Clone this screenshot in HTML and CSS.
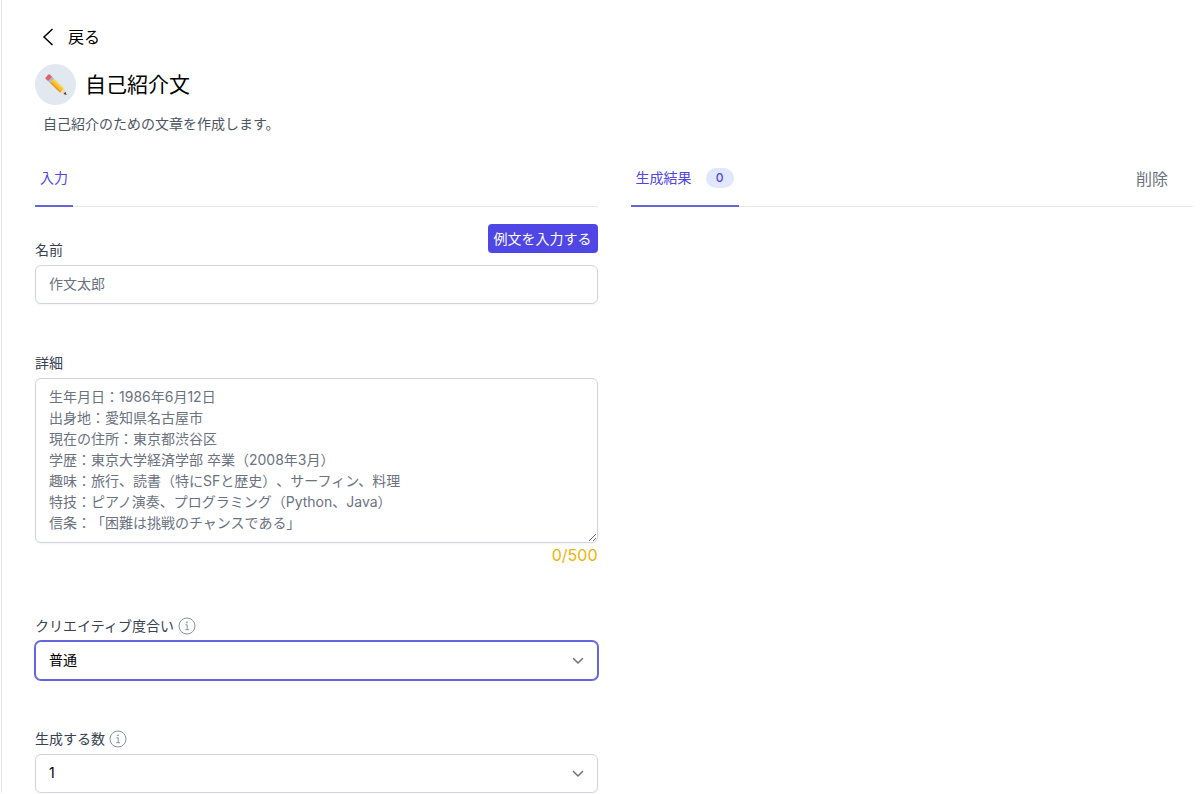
FILE: index.html
```html
<!DOCTYPE html>
<html lang="ja">
<head>
<meta charset="utf-8">
<meta name="viewport" content="width=device-width, initial-scale=1">
<title>自己紹介文</title>
<link rel="stylesheet" href="styles.css">
</head>
<body>
<main class="page">
  <a class="back" href="#">
    <svg class="back-icon" viewBox="0 0 12 18" aria-hidden="true"><path d="M10.500 1 2 9l8.500 8"/></svg>
    戻る
  </a>
  <header class="heading">
    <span class="heading-icon">
      <svg viewBox="0 0 24 24" aria-hidden="true">
        <g transform="translate(3 3) rotate(44)">
          <path fill="#e2606c" d="M0-2Q0-3 1-3H4.500V3H1Q0 3 0 2Z"/>
          <path fill="#9cc3cb" d="M4.500-3H7V3H4.500Z"/>
          <path fill="#fbd24b" d="M7-3H21V-1H7Z"/>
          <path fill="#f7bc20" d="M7-1H21V1.200H7Z"/>
          <path fill="#e79a16" d="M7 1.200H21V3H7Z"/>
          <path fill="#f3d9a4" d="M21-3 27 0 21 3Z"/>
          <path fill="#3e4347" d="M24.300-1.500 27.300 0 24.300 1.500Z"/>
        </g>
      </svg>
    </span>
    <h1 class="title">自己紹介文</h1>
  </header>
  <p class="description">自己紹介のための文章を作成します。</p>

  <div class="columns">
    <section>
      <nav class="tabs">
        <a class="tab" href="#">入力</a>
      </nav>
      <form class="form">
        <div class="field">
          <div class="label-row">
            <label class="label" for="name">名前</label>
            <button class="example" type="button">例文を入力する</button>
          </div>
          <input class="control" id="name" type="text" placeholder="作文太郎">
        </div>
        <div class="field">
          <label class="label" for="detail">詳細</label>
          <textarea class="control detail" id="detail" rows="7" placeholder="生年月日：1986年6月12日
出身地：愛知県名古屋市
現在の住所：東京都渋谷区
学歴：東京大学経済学部 卒業（2008年3月）
趣味：旅行、読書（特にSFと歴史）、サーフィン、料理
特技：ピアノ演奏、プログラミング（Python、Java）
信条：「困難は挑戦のチャンスである」"></textarea>
          <p class="count">0/500</p>
        </div>
        <div class="field">
          <label class="label" for="creative">クリエイティブ度合い<svg class="info" viewBox="0 0 18 18" aria-hidden="true"><circle cx="9" cy="9" r="8"/><path d="M7.500 7.800H9.200V12.700M7.300 12.700H11"/><circle class="dot" cx="9" cy="5.300" r=".9"/></svg></label>
          <div class="select">
            <select class="control active" id="creative"><option>普通</option></select>
            <svg class="arrow" viewBox="0 0 12 8" aria-hidden="true"><path d="M1.500 1.500 6 6 10.500 1.500"/></svg>
          </div>
        </div>
        <div class="field">
          <label class="label" for="amount">生成する数<svg class="info" viewBox="0 0 18 18" aria-hidden="true"><circle cx="9" cy="9" r="8"/><path d="M7.500 7.800H9.200V12.700M7.300 12.700H11"/><circle class="dot" cx="9" cy="5.300" r=".9"/></svg></label>
          <div class="select">
            <select class="control" id="amount"><option>1</option></select>
            <svg class="arrow" viewBox="0 0 12 8" aria-hidden="true"><path d="M1.500 1.500 6 6 10.500 1.500"/></svg>
          </div>
        </div>
      </form>
    </section>

    <section>
      <nav class="tabs">
        <a class="tab" href="#">生成結果 <span class="badge">0</span></a>
        <button class="delete" type="button">削除</button>
      </nav>
    </section>
  </div>
</main>
</body>
</html>
```
FILE: styles.css
```css
*, *::before, *::after { box-sizing: border-box; }

body {
  margin: 0;
  background: #fff;
  color: #000;
  font: 14px/20px Inter, "Noto Sans CJK JP", sans-serif;
  text-spacing-trim: space-all;
}

h1, p { margin: 0; font-weight: 400; }
a { color: inherit; text-decoration: none; }
button, input, select, textarea { font: inherit; margin: 0; }

.page {
  margin-left: 1px;
  padding: 25px 7px 0 33px;
  border-left: 1px solid #e5e7eb;
}

.back {
  display: flex;
  align-items: center;
  gap: 14px;
  width: fit-content;
  padding-left: 7px;
  font-size: 16px;
  line-height: 24px;
}
.back-icon {
  width: 12px;
  height: 18px;
  fill: none;
  stroke: #000;
  stroke-width: 1.5;
}

.heading {
  display: flex;
  align-items: center;
  gap: 9px;
  margin-top: 15px;
}
.heading-icon {
  display: grid;
  place-items: center;
  width: 41px;
  height: 41px;
  border-radius: 50%;
  background: #e2e8f0;
}
.heading-icon svg { width: 24px; height: 24px; }
.title { font-size: 21px; line-height: 28px; }

.description {
  margin-top: 9px;
  padding-left: 8px;
  color: #4b5563;
}

.columns {
  display: grid;
  grid-template-columns: 1fr 1fr;
  gap: 33px;
  margin-top: 24px;
}

.tabs {
  display: flex;
  justify-content: space-between;
  box-shadow: inset 0 -1px #e5e7eb;
}
.tab {
  display: flex;
  align-items: center;
  gap: 14px;
  padding: 10px 5px 17px;
  border-bottom: 2px solid #6366d8;
  color: #4f46e5;
}
.badge {
  min-width: 28px;
  border-radius: 10px;
  background: #e0e7ff;
  font-size: 12px;
  font-weight: 500;
  text-align: center;
}
.delete {
  padding: 0 25px 8px 0;
  border: 0;
  background: none;
  color: #6b7280;
  font-size: 16px;
}

.form {
  display: grid;
  gap: 49px;
  padding-top: 17px;
}
.label {
  display: flex;
  align-items: center;
  gap: 4px;
  margin-bottom: 5px;
  color: #374151;
}
.label-row { display: flex; justify-content: space-between; }
.label-row .label { padding-top: 16px; }
.example {
  align-self: flex-start;
  height: 29px;
  padding: 0 6px;
  border: 0;
  border-radius: 4px;
  background: #4f46e5;
  color: #fff;
}

.control {
  display: block;
  width: 100%;
  height: 39px;
  padding: 7px 13px 9px;
  border: 1px solid #d1d5db;
  border-radius: 6px;
  background: #fff;
  box-shadow: 0 1px 2px rgb(0 0 0 / 5%);
  color: #000;
  outline: 0;
}
.control::placeholder { color: #6b7280; opacity: 1; }
.detail {
  height: auto;
  line-height: 21px;
  overflow: auto;
  resize: vertical;
  text-spacing-trim: space-all;
}
.count {
  color: #eab308;
  font-size: 16px;
  line-height: 24px;
  text-align: right;
}

.info {
  width: 18px;
  height: 18px;
  fill: none;
  stroke: #8b9097;
  stroke-width: 1;
}
.info .dot { fill: #8b9097; stroke: none; }

.select { display: grid; align-items: center; }
.select > * { grid-area: 1 / 1; }
.select .control { appearance: none; }
.select .active {
  border-color: #6366e0;
  box-shadow: 0 0 0 1px #6366e0;
}
.arrow {
  justify-self: end;
  width: 12px;
  height: 8px;
  margin-right: 14px;
  fill: none;
  stroke: #6b7280;
  stroke-width: 1.5;
  stroke-linecap: round;
  stroke-linejoin: round;
  pointer-events: none;
}
```
